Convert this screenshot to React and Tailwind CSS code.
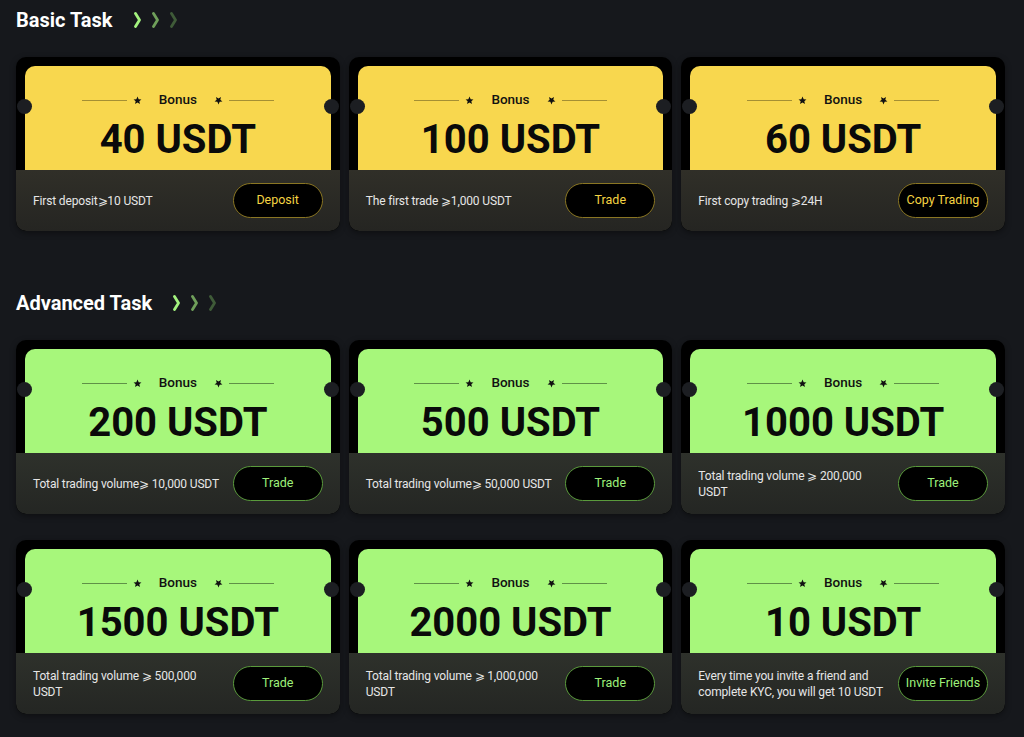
const THEMES = {
  yellow: {
    face: 'bg-[#f8d74e]',
    line: 'bg-[#a58f33]',
    bottom: 'bg-gradient-to-b from-[#302f28] to-[#252522]',
    btn: 'border-[#8a7623] text-[#f5d443]',
  },
  green: {
    face: 'bg-[#a7f77b]',
    line: 'bg-[#5f9147]',
    bottom: 'bg-gradient-to-b from-[#2e312b] to-[#242623]',
    btn: 'border-[#5a9a3c] text-[#9ef07a]',
  },
}

const BASIC = [
  { amount: '40 USDT', desc: 'First deposit⩾10 USDT', btn: 'Deposit' },
  { amount: '100 USDT', desc: 'The first trade ⩾1,000 USDT', btn: 'Trade' },
  { amount: '60 USDT', desc: 'First copy trading ⩾24H', btn: 'Copy Trading' },
]

const ADVANCED = [
  { amount: '200 USDT', desc: 'Total trading volume⩾ 10,000 USDT', btn: 'Trade' },
  { amount: '500 USDT', desc: 'Total trading volume⩾ 50,000 USDT', btn: 'Trade' },
  { amount: '1000 USDT', desc: 'Total trading volume ⩾ 200,000 USDT', btn: 'Trade' },
  { amount: '1500 USDT', desc: 'Total trading volume ⩾ 500,000 USDT', btn: 'Trade' },
  { amount: '2000 USDT', desc: 'Total trading volume ⩾ 1,000,000 USDT', btn: 'Trade' },
  { amount: '10 USDT', desc: 'Every time you invite a friend and complete KYC, you will get 10 USDT', btn: 'Invite Friends' },
]

function Star({ flip }) {
  return (
    <svg width="9" height="9" viewBox="0 0 24 24" className={flip ? 'rotate-180' : ''}>
      <path d="M12 1.5l3.1 7 7.4.6-5.6 5 1.7 7.4L12 17.6l-6.6 3.9 1.7-7.4-5.6-5 7.4-.6z" fill="#111" />
    </svg>
  )
}

function Chevrons() {
  const colors = ['#a3f27e', '#6f9f5a', '#3f5b38']
  return (
    <div className="flex items-center gap-[11px]">
      {colors.map((c) => (
        <svg key={c} width="7" height="16" viewBox="0 0 7 16">
          <path d="M1.5 1.5 L5.5 8 L1.5 14.5" stroke={c} strokeWidth="2.8" fill="none" strokeLinecap="round" strokeLinejoin="round" />
        </svg>
      ))}
    </div>
  )
}

function Heading({ title }) {
  return (
    <div className="flex items-center gap-[21px] h-[20px]">
      <h2 className="text-[20px] font-bold text-white leading-none">{title}</h2>
      <Chevrons />
    </div>
  )
}

function TaskCard({ task, theme }) {
  const t = THEMES[theme]
  return (
    <div className="relative rounded-[10px] bg-black overflow-hidden shadow-[0_2px_6px_rgba(0,0,0,0.4)]">
      <div className="px-[9px] pt-[9px]">
        <div className={`h-[104px] rounded-t-[10px] ${t.face} flex flex-col items-center pt-[25px]`}>
          <div className="flex items-center h-[18px]">
            <div className={`w-[45px] h-px ${t.line}`} />
            <div className="ml-[6px]"><Star /></div>
            <span className="mx-[17px] text-[13.5px] font-medium text-[#111] leading-none">Bonus</span>
            <div className="mr-[6px]"><Star flip /></div>
            <div className={`w-[45px] h-px ${t.line}`} />
          </div>
          <div className="mt-[8px] text-[40px] font-bold text-[#0a0a0a] leading-[46px]">
            {task.amount}
          </div>
        </div>
      </div>
      <div className={`h-[61px] flex items-center justify-between pl-[17px] pr-[17px] gap-2 rounded-b-[10px] ${t.bottom}`}>
        <p className="text-[12px] leading-[16px] text-[#e6e6e6] max-w-[192px] tracking-[-0.15px]">{task.desc}</p>
        <button className={`shrink-0 w-[90px] h-[35px] rounded-full bg-black border text-[12.5px] ${t.btn}`}>
          {task.btn}
        </button>
      </div>
      <div className="absolute left-px top-[42px] w-[15px] h-[15px] rounded-full bg-[#1c1e22]" />
      <div className="absolute right-px top-[42px] w-[15px] h-[15px] rounded-full bg-[#1c1e22]" />
    </div>
  )
}

export default function App() {
  return (
    <div
      className="min-h-[737px] w-full bg-[#16181c] pl-[16px] pr-[19px] pt-[10px] pb-[25px]"
      style={{ fontFamily: 'Roboto, "Liberation Sans", sans-serif' }}
    >
      <Heading title="Basic Task" />
      <div className="grid grid-cols-3 gap-[9px] mt-[27px]">
        {BASIC.map((task) => (
          <TaskCard key={task.amount} task={task} theme="yellow" />
        ))}
      </div>
      <div className="mt-[62px]">
        <Heading title="Advanced Task" />
      </div>
      <div className="grid grid-cols-3 gap-x-[9px] gap-y-[26px] mt-[27px]">
        {ADVANCED.map((task) => (
          <TaskCard key={task.amount} task={task} theme="green" />
        ))}
      </div>
    </div>
  )
}
